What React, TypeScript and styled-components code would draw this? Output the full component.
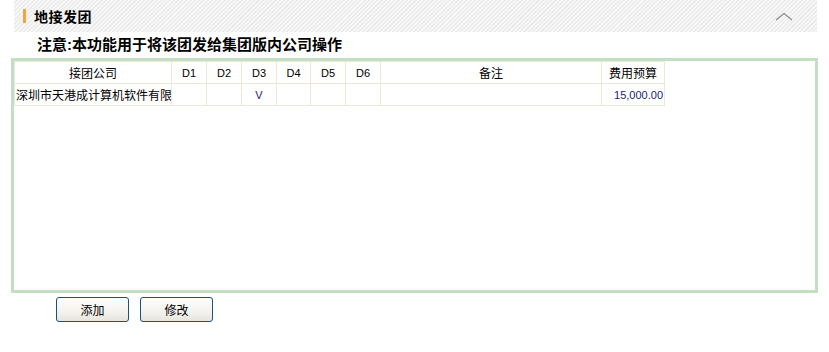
import React from "react";
import styled, { createGlobalStyle } from "styled-components";

const Global = createGlobalStyle`
  html, body { margin: 0; padding: 0; background: #fff; }
  body { font-family: "Liberation Sans", "Noto Sans CJK SC", sans-serif; color: #000; }
`;

const Page = styled.div`
  width: 829px;
  height: 352px;
  display: flex;
  flex-direction: column;
`;

const Header = styled.div`
  margin-left: 14px;
  width: 803px;
  height: 32px;
  box-sizing: border-box;
  display: flex;
  align-items: center;
  padding: 0 24px 0 9px;
  background: repeating-linear-gradient(
    135deg,
    #f7f7f7 0px,
    #f7f7f7 1.5px,
    #ececec 1.5px,
    #ececec 3px
  );
`;

const Bar = styled.span`
  width: 3px;
  height: 14px;
  background: #f7a23a;
  margin-right: 8px;
`;

const Title = styled.span`
  font-size: 14px;
  font-weight: bold;
  letter-spacing: 0.5px;
  flex: 1;
`;

const Note = styled.div`
  height: 26px;
  line-height: 26px;
  padding-left: 37px;
  font-size: 15px;
  font-weight: bold;
`;

const Box = styled.div`
  margin-left: 11px;
  width: 807px;
  height: 235px;
  box-sizing: border-box;
  border: 3px solid #c4dec3;
`;

const Table = styled.table`
  width: 650px;
  border-collapse: collapse;
  table-layout: fixed;
  font-size: 12px;
`;

const Col = styled.col<{ $w: number }>`
  width: ${(p) => p.$w}px;
`;

const Th = styled.th<{ $latin?: boolean }>`
  height: 21px;
  padding: 0;
  border: 1px solid #ebe8d8;
  font-weight: normal;
  text-align: center;
  font-size: ${(p) => (p.$latin ? "11px" : "12px")};
  color: #000;
`;

const Td = styled.td<{ $align?: string; $latin?: boolean }>`
  height: 21px;
  padding: 0 1px;
  border: 1px solid #ebe8d8;
  text-align: ${(p) => p.$align || "left"};
  font-size: ${(p) => (p.$latin ? "11px" : "12px")};
  color: ${(p) => (p.$latin ? "#23237a" : "#000")};
  white-space: nowrap;
  overflow: hidden;
`;

const Buttons = styled.div`
  display: flex;
  gap: 11px;
  padding: 4px 0 0 56px;
`;

const Button = styled.button`
  width: 73px;
  height: 25px;
  box-sizing: border-box;
  border: 1px solid #1d4f7f;
  border-radius: 3px;
  background: linear-gradient(#ffffff, #f3f2ee 60%, #e6e4dc);
  font-family: "Liberation Sans", "Noto Sans CJK SC", sans-serif;
  font-size: 12px;
  color: #000;
  padding: 0;
`;

const Chevron = () => (
  <svg width="18" height="9" viewBox="0 0 18 9">
    <polyline points="1,8 9,1.5 17,8" fill="none" stroke="#8a8a8a" strokeWidth="1.1" />
  </svg>
);

const cols = [
  { label: "接团公司", w: 157 },
  { label: "D1", w: 35, latin: true },
  { label: "D2", w: 35, latin: true },
  { label: "D3", w: 35, latin: true },
  { label: "D4", w: 34, latin: true },
  { label: "D5", w: 35, latin: true },
  { label: "D6", w: 35, latin: true },
  { label: "备注", w: 221 },
  { label: "费用预算", w: 63 },
];

export default function App() {
  return (
    <Page>
      <Global />
      <Header>
        <Bar />
        <Title>地接发团</Title>
        <Chevron />
      </Header>
      <Note>注意:本功能用于将该团发给集团版内公司操作</Note>
      <Box>
        <Table>
          <colgroup>
            {cols.map((c) => (
              <Col key={c.label} $w={c.w} />
            ))}
          </colgroup>
          <thead>
            <tr>
              {cols.map((c) => (
                <Th key={c.label} $latin={c.latin}>
                  {c.label}
                </Th>
              ))}
            </tr>
          </thead>
          <tbody>
            <tr>
              <Td>深圳市天港成计算机软件有限</Td>
              <Td />
              <Td />
              <Td $align="center" $latin>V</Td>
              <Td />
              <Td />
              <Td />
              <Td />
              <Td $align="right" $latin>15,000.00</Td>
            </tr>
          </tbody>
        </Table>
      </Box>
      <Buttons>
        <Button>添加</Button>
        <Button>修改</Button>
      </Buttons>
    </Page>
  );
}
